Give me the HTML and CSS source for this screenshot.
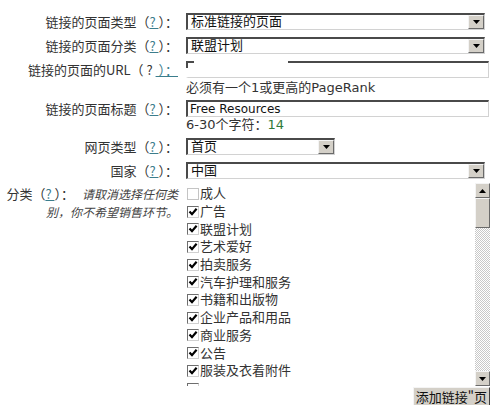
FILE: index.html
```html
<!DOCTYPE html>
<html lang="zh-CN">
<head>
  <meta charset="UTF-8">
  <title>添加链接页</title>
  <link rel="stylesheet" href="styles.css">
</head>
<body>

<div class="form">
  <!-- 链接页面 -->
  <div class="row r1">
    <div class="label">链接的页面类型（<a href="#" class="help">?&nbsp;</a>）：</div>
    <div class="select w299"><span class="value">标准链接的页面</span><span class="arrow"><svg viewBox="0 0 7 4"><path d="M0 0H7L3.5 4Z"/></svg></span></div>
  </div>
  <div class="row r2">
    <div class="label">链接的页面分类（<a href="#" class="help">?&nbsp;</a>）：</div>
    <div class="select w299"><span class="value">联盟计划</span><span class="arrow"><svg viewBox="0 0 7 4"><path d="M0 0H7L3.5 4Z"/></svg></span></div>
  </div>
  <div class="row r3">
    <div class="label">链接的页面的URL（ ? <a href="#" class="help">&nbsp;）：</a></div>
    <div class="input w303 glitch"></div>
  </div>
  <div class="hint h1">必须有一个1或更高的PageRank</div>
  <div class="row r4">
    <div class="label">链接的页面标题（<a href="#" class="help">?&nbsp;</a>）：</div>
    <div class="input w303"><span class="en">Free Resources</span></div>
  </div>
  <div class="hint h2">6-30个字符：<span class="count">14</span></div>
  <div class="row r5">
    <div class="label">网页类型（<a href="#" class="help">?&nbsp;</a>）：</div>
    <div class="select w149"><span class="value">首页</span><span class="arrow"><svg viewBox="0 0 7 4"><path d="M0 0H7L3.5 4Z"/></svg></span></div>
  </div>
  <div class="row r6">
    <div class="label">国家（<a href="#" class="help">?&nbsp;</a>）：</div>
    <div class="select w299"><span class="value">中国</span><span class="arrow"><svg viewBox="0 0 7 4"><path d="M0 0H7L3.5 4Z"/></svg></span></div>
  </div>

  <!-- 分类列表 -->
  <div class="row r7">
    <div class="label cat">分类（<a href="#" class="help">?&nbsp;</a>）：<span class="note">请取消选择任何类<br>别，你不希望销售环节。</span></div>
    <div class="listbox">
      <div class="items">
        <div class="item"><span class="cb"></span>成人</div>
        <div class="item"><span class="cb on"><svg viewBox="0 0 10 10"><path d="M1.5 4.5L4 7.2L8.6 1.8"/></svg></span>广告</div>
        <div class="item"><span class="cb on"><svg viewBox="0 0 10 10"><path d="M1.5 4.5L4 7.2L8.6 1.8"/></svg></span>联盟计划</div>
        <div class="item"><span class="cb on"><svg viewBox="0 0 10 10"><path d="M1.5 4.5L4 7.2L8.6 1.8"/></svg></span>艺术爱好</div>
        <div class="item"><span class="cb on"><svg viewBox="0 0 10 10"><path d="M1.5 4.5L4 7.2L8.6 1.8"/></svg></span>拍卖服务</div>
        <div class="item"><span class="cb on"><svg viewBox="0 0 10 10"><path d="M1.5 4.5L4 7.2L8.6 1.8"/></svg></span>汽车护理和服务</div>
        <div class="item"><span class="cb on"><svg viewBox="0 0 10 10"><path d="M1.5 4.5L4 7.2L8.6 1.8"/></svg></span>书籍和出版物</div>
        <div class="item"><span class="cb on"><svg viewBox="0 0 10 10"><path d="M1.5 4.5L4 7.2L8.6 1.8"/></svg></span>企业产品和用品</div>
        <div class="item"><span class="cb on"><svg viewBox="0 0 10 10"><path d="M1.5 4.5L4 7.2L8.6 1.8"/></svg></span>商业服务</div>
        <div class="item"><span class="cb on"><svg viewBox="0 0 10 10"><path d="M1.5 4.5L4 7.2L8.6 1.8"/></svg></span>公告</div>
        <div class="item"><span class="cb on"><svg viewBox="0 0 10 10"><path d="M1.5 4.5L4 7.2L8.6 1.8"/></svg></span>服装及衣着附件</div>
        <div class="item peek"><span class="cb on"></span></div>
      </div>
      <div class="scrollbar">
        <span class="sbtn"><svg viewBox="0 0 7 4"><path d="M0 4H7L3.5 0Z"/></svg></span>
        <span class="thumb"></span>
        <span class="track"></span>
        <span class="sbtn"><svg viewBox="0 0 7 4"><path d="M0 0H7L3.5 4Z"/></svg></span>
      </div>
    </div>
  </div>

  <div class="actions">
    <button class="submit">添加链接"页</button>
  </div>
</div>

</body>
</html>
```

FILE: styles.css
```css
/* Page */
body {
  margin: 0;
  background: #fff;
  color: #333;
  font-family: "DejaVu Sans", "Noto Sans CJK SC", sans-serif;
  font-size: 13px;
  overflow: hidden;
}
.form {
  width: 492px;
  padding-top: 13px;
}
.row {
  display: flex;
  align-items: center;
  gap: 8px;
}
.label {
  width: 178px;
  flex: none;
  text-align: right;
  white-space: nowrap;
  line-height: 17px;
  font-family: "Noto Sans CJK SC", sans-serif;
}
.help {
  color: #3b7d8c;
  text-decoration: underline;
}

/* Row spacing */
.r2 { margin-top: 7px; }
.r3 { margin-top: 7px; }
.r4 { margin-top: 5px; }
.r5 { margin-top: 6px; }
.r6 { margin-top: 7px; }
.r7 { margin-top: 4px; align-items: flex-start; }

.hint {
  margin-left: 186px;
  line-height: 15px;
  white-space: nowrap;
}
.h1 { margin-top: 2px; }
.count { color: #2f7a3a; }

/* Classic controls */
.select,
.input {
  box-sizing: border-box;
  height: 17px;
  display: flex;
  align-items: center;
  background: #fff;
  border-style: solid;
  border-width: 2px 1px 1px 2px;
  border-color: #4a4a4a #d2d2d2 #d2d2d2 #4a4a4a;
  color: #111;
}
.w299 { width: 299px; }
.w303 { width: 303px; }
.w149 { width: 149px; }
.value {
  flex: 1;
  padding-left: 3px;
  line-height: 14px;
  white-space: nowrap;
}
.arrow {
  box-sizing: border-box;
  width: 16px;
  height: 14px;
  display: flex;
  align-items: center;
  justify-content: center;
  background: #d4d0c8;
  border-style: solid;
  border-width: 1px;
  border-color: #f4f4f4 #6a6a6a #6a6a6a #f4f4f4;
}
.arrow svg,
.sbtn svg {
  width: 7px;
  height: 4px;
  fill: #000;
}
.input .en {
  padding-left: 2px;
  font-size: 12px;
  line-height: 14px;
}
/* URL input draws only part of its top edge */
.glitch {
  border-color: transparent #d2d2d2 #d2d2d2 transparent;
  background:
    linear-gradient(#4a4a4a, #4a4a4a) 0 0 / 8px 2px no-repeat,
    linear-gradient(#4a4a4a, #4a4a4a) 0 0 / 2px 7px no-repeat,
    linear-gradient(#4a4a4a, #4a4a4a) 102px 0 / calc(100% - 102px) 2px no-repeat,
    #fff;
  background-origin: border-box;
}

/* Category note */
.cat {
  line-height: 18px;
  padding-top: 2px;
}
.note {
  font-size: 12px;
  font-style: italic;
  margin-left: 8px;
  color: #444;
}

/* List with checkboxes */
.listbox {
  width: 304px;
  height: 203px;
  display: flex;
}
.items {
  flex: 1;
  overflow: hidden;
  padding-top: 2px;
}
.item {
  height: 17.7px;
  display: flex;
  align-items: center;
  white-space: nowrap;
  line-height: 17px;
}
.item.peek { align-items: flex-start; padding-top: 3px; }
.cb {
  box-sizing: border-box;
  width: 12px;
  height: 12px;
  margin: 0 1px 0 1px;
  display: inline-flex;
  align-items: center;
  justify-content: center;
  background: #fff;
  border: 1px solid #c4c4c4;
}
.cb.on {
  border-color: #6e6e6e #d0d0d0 #d0d0d0 #6e6e6e;
}
.cb svg {
  width: 10px;
  height: 10px;
  fill: none;
  stroke: #000;
  stroke-width: 2.2;
}

.scrollbar {
  width: 15px;
  display: flex;
  flex-direction: column;
}
.sbtn,
.thumb {
  box-sizing: border-box;
  background: #d4d0c8;
  border-style: solid;
  border-width: 1px;
  border-color: #f4f4f4 #6a6a6a #6a6a6a #f4f4f4;
}
.sbtn {
  height: 15px;
  display: flex;
  align-items: center;
  justify-content: center;
}
.thumb { height: 30px; }
.track {
  flex: 1;
  background: repeating-conic-gradient(#c8c8c8 0 25%, #fff 0 50%) 0 0 / 2px 2px;
}

/* Submit */
.actions {
  display: flex;
  justify-content: flex-end;
  width: 490px;
  margin-top: 1px;
}
.submit {
  height: 19px;
  padding: 0 2px;
  font-family: "Noto Sans CJK SC", sans-serif;
  font-size: 13px;
  line-height: 15px;
  color: #111;
  background: #d4d0c8;
  border-style: solid;
  border-width: 1px;
  border-color: #f4f4f4 #404040 #404040 #f4f4f4;
}
```
